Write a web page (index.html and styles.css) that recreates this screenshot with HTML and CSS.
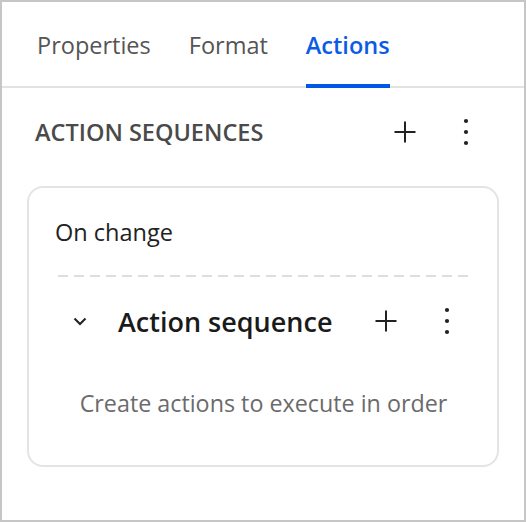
FILE: index.html
```html
<!DOCTYPE html>
<html lang="en">
<head>
<meta charset="utf-8">
<title>Actions panel</title>
<link rel="stylesheet" href="styles.css">
</head>
<body>
<div class="panel">
  <nav class="tabs">
    <div class="tab">Properties</div>
    <div class="tab">Format</div>
    <div class="tab tab-active">Actions</div>
  </nav>

  <div class="section-head">
    <h2 class="section-title">ACTION SEQUENCES</h2>
    <div class="icon-group">
      <button class="icon-btn" aria-label="Add">
        <svg width="24" height="24" viewBox="0 0 24 24"><path d="M12 1.5v21M1.5 12h21" stroke="#222" stroke-width="2" fill="none"/></svg>
      </button>
      <button class="icon-btn" aria-label="More">
        <svg width="24" height="28" viewBox="0 0 24 28"><circle cx="12" cy="3" r="2.1" fill="#222"/><circle cx="12" cy="14" r="2.1" fill="#222"/><circle cx="12" cy="25" r="2.1" fill="#222"/></svg>
      </button>
    </div>
  </div>

  <div class="card">
    <div class="trigger">On change</div>
    <div class="divider"></div>
    <div class="seq-row">
      <span class="chev">
        <svg width="24" height="24" viewBox="0 0 24 24"><path d="M6.5 9.5l5.5 5.5 5.5-5.5" stroke="#222" stroke-width="2" fill="none"/></svg>
      </span>
      <span class="seq-title">Action sequence</span>
      <div class="icon-group">
        <button class="icon-btn" aria-label="Add action">
          <svg width="24" height="24" viewBox="0 0 24 24"><path d="M12 1.5v21M1.5 12h21" stroke="#222" stroke-width="2" fill="none"/></svg>
        </button>
        <button class="icon-btn" aria-label="More">
          <svg width="24" height="28" viewBox="0 0 24 28"><circle cx="12" cy="3" r="2.1" fill="#222"/><circle cx="12" cy="14" r="2.1" fill="#222"/><circle cx="12" cy="25" r="2.1" fill="#222"/></svg>
        </button>
      </div>
    </div>
    <p class="empty">Create actions to execute in order</p>
  </div>
</div>
</body>
</html>
```

FILE: styles.css
```css
* { box-sizing: border-box; }

html, body {
  margin: 0;
  padding: 0;
  background: #ffffff;
}

body {
  font-family: "Open Sans", "Liberation Sans", sans-serif;
  color: #222;
}

.panel {
  width: 526px;
  height: 522px;
  border: 2px solid #c6c6c6;
  background: #fff;
  display: flex;
  flex-direction: column;
}

.tabs {
  display: flex;
  gap: 38px;
  padding-left: 35px;
  height: 86px;
  border-bottom: 2px solid #e2e2e2;
  align-items: stretch;
}

.tab {
  font-size: 23.5px;
  line-height: 28px;
  padding-top: 29px;
  color: #555;
}

.tab-active {
  color: #0a5ce6;
  font-weight: 600;
  border-bottom: 4px solid #0057e6;
  margin-bottom: -2px;
}

.section-head {
  display: flex;
  align-items: center;
  height: 40px;
  margin-top: 24px;
  padding-left: 33px;
  padding-right: 38px;
}

.section-title {
  flex: 1;
  margin: 0;
  font-size: 23.5px;
  font-weight: 600;
  color: #4a4a4a;
}

.icon-group {
  display: flex;
  gap: 21px;
}

.icon-btn {
  width: 40px;
  height: 40px;
  border: 0;
  padding: 0;
  background: none;
  display: flex;
  align-items: center;
  justify-content: center;
}

.card {
  margin: 34px 25px 0 25px;
  border: 2px solid #e4e4e4;
  border-radius: 16px;
  padding: 30px 25px 48px 26px;
}

.trigger {
  font-size: 23.5px;
  line-height: 28px;
  color: #222;
}

.divider {
  height: 2px;
  margin: 29px 0 0 3px;
  background-image: repeating-linear-gradient(to right, #dedede 0 10px, transparent 10px 16px);
}

.seq-row {
  display: flex;
  align-items: center;
  height: 44px;
  margin-top: 22px;
  padding-left: 13px;
  padding-right: 5px;
}

.chev {
  width: 24px;
  height: 24px;
  display: flex;
  margin-right: 26px;
}

.seq-title {
  flex: 1;
  font-size: 27px;
  font-weight: 600;
  color: #1a1a1a;
}

.empty {
  margin: 46px 0 0 0;
  font-size: 23.3px;
  line-height: 28px;
  text-align: center;
  color: #6b6b6b;
}
```
